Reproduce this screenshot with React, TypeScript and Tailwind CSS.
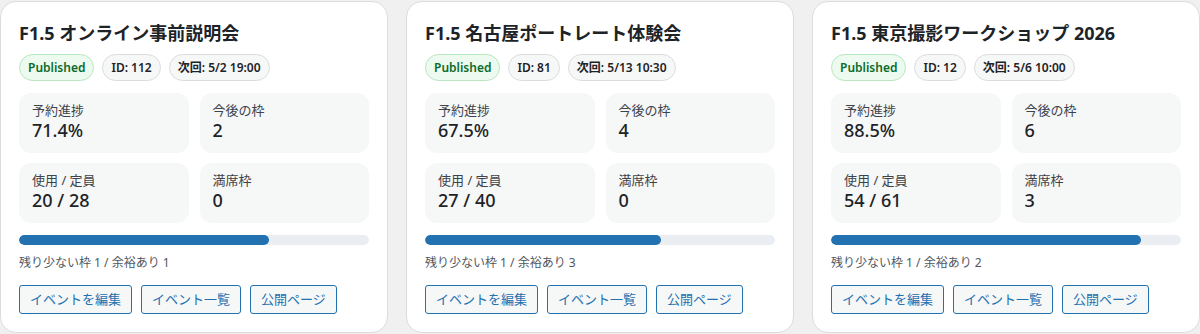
import React from "react";

type Card = {
  title: string;
  id: number;
  next: string;
  progress: string;
  pct: number;
  future: number;
  used: string;
  full: number;
  note: string;
};

const cards: Card[] = [
  { title: "F1.5 オンライン事前説明会", id: 112, next: "5/2 19:00", progress: "71.4%", pct: 71.4, future: 2, used: "20 / 28", full: 0, note: "残り少ない枠 1 / 余裕あり 1" },
  { title: "F1.5 名古屋ポートレート体験会", id: 81, next: "5/13 10:30", progress: "67.5%", pct: 67.5, future: 4, used: "27 / 40", full: 0, note: "残り少ない枠 1 / 余裕あり 3" },
  { title: "F1.5 東京撮影ワークショップ 2026", id: 12, next: "5/6 10:00", progress: "88.5%", pct: 88.5, future: 6, used: "54 / 61", full: 3, note: "残り少ない枠 1 / 余裕あり 2" },
];

function Stat({ label, value }: { label: string; value: string | number }) {
  return (
    <div className="rounded-[12px] bg-[#f6f7f7] px-[13px] pt-[8px] h-[60px]">
      <div className="text-[13px] leading-[18px] text-[#3c434a]">{label}</div>
      <div className="text-[18px] leading-[22px] font-medium text-[#1d2327]">{value}</div>
    </div>
  );
}

export default function App() {
  return (
    <div
      className="w-[1200px] h-[334px] bg-[#f0f0f1] pt-[1px] grid grid-cols-3 gap-x-[18px] items-start"
      style={{ fontFamily: '"Noto Sans", "Noto Sans CJK JP", sans-serif' }}
    >
      {cards.map((c) => (
        <div
          key={c.id}
          className="bg-white border border-[#dcdcde] rounded-[16px] px-[18px] pt-[17px] pb-[17px] h-[332px] flex flex-col"
        >
          <h2 className="text-[18px] leading-[28px] font-bold text-[#1d2327] m-0">{c.title}</h2>
          <div className="flex gap-[8px] mt-[7px]">
            <span className="h-[27px] px-[8px] flex items-center rounded-full border border-[#b8e6bf] bg-[#edfaef] text-[#0b6b2a] text-[12px] font-semibold">
              Published
            </span>
            <span className="h-[27px] px-[8px] flex items-center rounded-full border border-[#dcdcde] bg-[#f6f7f7] text-[#1d2327] text-[12px] font-semibold">
              ID: {c.id}
            </span>
            <span className="h-[27px] px-[8px] flex items-center rounded-full border border-[#dcdcde] bg-[#f6f7f7] text-[#1d2327] text-[12px] font-semibold">
              次回: {c.next}
            </span>
          </div>
          <div className="grid grid-cols-2 gap-x-[11px] gap-y-[10px] mt-[12px]">
            <Stat label="予約進捗" value={c.progress} />
            <Stat label="今後の枠" value={c.future} />
            <Stat label="使用 / 定員" value={c.used} />
            <Stat label="満席枠" value={c.full} />
          </div>
          <div className="mt-[12px] h-[10px] rounded-full bg-[#eaeef2] overflow-hidden">
            <div className="h-full bg-[#2271b1] rounded-full" style={{ width: `${c.pct}%` }} />
          </div>
          <div className="mt-[9px] text-[12px] leading-[18px] text-[#50575e]">{c.note}</div>
          <div className="flex gap-[9px] mt-[13px]">
            {["イベントを編集", "イベント一覧", "公開ページ"].map((b) => (
              <button
                key={b}
                className="h-[29px] px-[10px] rounded-[3px] border border-[#2271b1] bg-[#f6f7f7] text-[#2271b1] text-[13px]"
              >
                {b}
              </button>
            ))}
          </div>
        </div>
      ))}
    </div>
  );
}
